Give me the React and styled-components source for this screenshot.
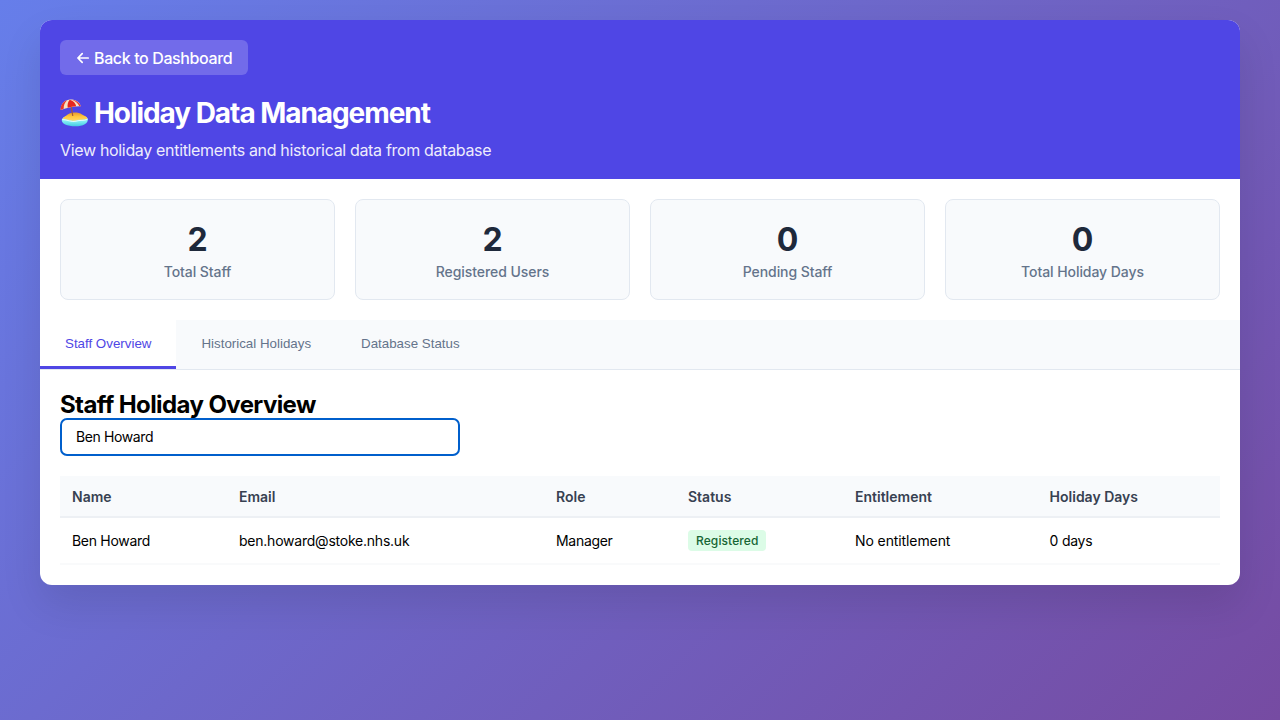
import React, { useState } from "react";
import styled, { createGlobalStyle } from "styled-components";

const GlobalStyle = createGlobalStyle`
  * { margin: 0; padding: 0; box-sizing: border-box; }
  body {
    font-family: Inter, "Liberation Sans", sans-serif;
    background: linear-gradient(135deg, #667eea 0%, #764ba2 100%);
    min-height: 100vh;
    padding: 20px;
  }
`;

const Card = styled.div`
  max-width: 1200px;
  margin: 0 auto;
  background: #fff;
  border-radius: 12px;
  box-shadow: 0 20px 40px rgba(0, 0, 0, 0.1);
  overflow: hidden;
`;

const Header = styled.header`
  background: #4f46e5;
  color: #fff;
  height: 159px;
  padding: 20px;
`;

const BackLink = styled.a`
  display: flex;
  align-items: center;
  gap: 4px;
  width: 188px;
  height: 35px;
  padding: 0 16px;
  border-radius: 6px;
  background: rgba(255, 255, 255, 0.2);
  font-size: 16px;
  font-weight: 450;
  letter-spacing: -0.38px;
  white-space: nowrap;
`;

const Title = styled.h1`
  display: flex;
  align-items: center;
  gap: 5px;
  margin-top: 21px;
  height: 34px;
  font-size: 28px;
  font-weight: 700;
  letter-spacing: -1.06px;
  white-space: nowrap;
`;

const Subtitle = styled.p`
  margin-top: 10px;
  font-size: 16px;
  line-height: 20px;
  letter-spacing: -0.33px;
  opacity: 0.9;
`;

const Stats = styled.section`
  display: grid;
  grid-template-columns: repeat(4, 1fr);
  gap: 20px;
  padding: 20px;
`;

const StatCard = styled.div`
  height: 101px;
  padding: 20px;
  border: 1px solid #e2e8f0;
  border-radius: 8px;
  background: #f8fafc;
  text-align: center;
`;

const StatValue = styled.div`
  font-size: 32px;
  line-height: 40px;
  font-weight: 700;
  color: #1e293b;
`;

const StatLabel = styled.div`
  margin-top: 3px;
  font-size: 14px;
  line-height: 17px;
  font-weight: 500;
  letter-spacing: -0.07px;
  color: #64748b;
`;

const Tabs = styled.nav`
  display: flex;
  height: 50px;
  background: #f8fafc;
  border-bottom: 1px solid #e2e8f0;
`;

const Tab = styled.button`
  padding: 1px 25px 0;
  border: none;
  border-bottom: 3px solid ${(p) => (p.$active ? "#4f46e5" : "transparent")};
  background: ${(p) => (p.$active ? "#fff" : "none")};
  color: ${(p) => (p.$active ? "#4f46e5" : "#64748b")};
  font: 13.333px "Liberation Sans", Arial, sans-serif;
  cursor: pointer;
`;

const Panel = styled.main`
  padding: 20px;
`;

const SectionTitle = styled.h2`
  height: 28px;
  font-size: 24px;
  line-height: 30px;
  font-weight: 700;
  letter-spacing: -0.6px;
`;

const Search = styled.input`
  display: block;
  width: 400px;
  height: 38px;
  margin-bottom: 20px;
  padding: 0 14px 1px;
  border: 2px solid #005fcc;
  border-radius: 7px;
  outline: none;
  background: #fff;
  color: #000;
  font: 14px Inter, "Liberation Sans", sans-serif;
  letter-spacing: -0.38px;
`;

const Table = styled.table`
  width: 100%;
  table-layout: fixed;
  border-collapse: separate;
  border-spacing: 0;
  font-size: 14px;
`;

const Col = styled.col`
  width: ${(p) => p.$width}px;
`;

const HeadCell = styled.th`
  height: 42px;
  padding: 0 12px;
  background: #f8fafc;
  border-bottom: 2px solid #edf0f4;
  color: #374151;
  font-weight: 600;
  text-align: left;
`;

const Cell = styled.td`
  height: 46.5px;
  padding: 0 12px;
  border-bottom: 2px solid #f9fafb;
  letter-spacing: ${(p) => p.$track || 0}px;
  white-space: nowrap;
`;

const Badge = styled.span`
  display: inline-block;
  padding: 0 8px;
  border-radius: 4px;
  background: #dcfce7;
  color: #166534;
  font-size: 12px;
  line-height: 21.5px;
  font-weight: 500;
  letter-spacing: 0.1px;
`;

const BeachIcon = styled.svg`
  width: 29px;
  height: 29px;
  flex: none;
`;

const ArrowIcon = styled.svg`
  width: 14px;
  height: 14px;
  flex: none;
`;

const Beach = () => (
  <BeachIcon viewBox="0 0 29 29">
    <defs>
      <linearGradient id="sea" x1="0" y1="0" x2="0" y2="1">
        <stop offset="0" stopColor="#b9f5fb" />
        <stop offset="0.6" stopColor="#7ceaf2" />
        <stop offset="1" stopColor="#43c8e4" />
      </linearGradient>
      <linearGradient id="sand" x1="0" y1="0" x2="0" y2="1">
        <stop offset="0" stopColor="#e79a2b" />
        <stop offset="0.5" stopColor="#ffc83e" />
        <stop offset="1" stopColor="#ffd76a" />
      </linearGradient>
    </defs>
    <path d="M1.800 20.500C3 17.500 8 16 15 16C22 16 27 17.500 27.800 20C28.500 24.500 23 27.300 15.500 27.300C7 27.300 1 24.500 1.800 20.500Z" fill="url(#sea)" />
    <path d="M2.500 19.500C5 17 7 16 9.500 14.500C13 13 19 13.300 22 15.500C24.500 16.800 27 17.500 27.500 19.500C24 21.500 20 20 16 21.500C12 22.500 7 20.300 2.500 19.500Z" fill="url(#sand)" />
    <path d="M2.300 20.600C7 20.500 12 23.600 16 22.200C20 20.700 24 22.200 27.500 20.300" fill="none" stroke="#effdff" strokeWidth="0.9" />
    <path d="M10.800 5L12.700 16.500" stroke="#a35b38" strokeWidth="1.200" strokeLinecap="round" />
    <path d="M0.700 11C0.600 5.500 4 1.500 8.700 0.800C14 -0.200 19.500 2.500 20.800 7.200C15 7 7 8.500 0.700 11Z" fill="#f7e3c4" />
    <path d="M0.700 11C0.300 6.500 3 2.500 7 1.200C4.500 3.800 3.600 6.500 3.700 9.800Z" fill="#e8382c" />
    <path d="M9.700 0.700C7.800 3 7.200 5.500 7.700 8.700C10.500 7.900 13.500 7.400 16.200 7.200C15.800 4.300 13.300 1.900 9.700 0.700Z" fill="#e5271f" />
    <path d="M11.500 0.700C16 1 19.800 3.500 20.800 7.200L19.200 7.100C17.800 3.800 15.500 2 11.500 0.700Z" fill="#e8382c" />
  </BeachIcon>
);

const Arrow = () => (
  <ArrowIcon viewBox="0 0 14 14" fill="none" stroke="currentColor" strokeWidth="1.700" strokeLinecap="round" strokeLinejoin="round">
    <path d="M12.200 7H2.100M6.200 2.700L1.900 7L6.200 11.300" />
  </ArrowIcon>
);

const stats = [
  ["2", "Total Staff"],
  ["2", "Registered Users"],
  ["0", "Pending Staff"],
  ["0", "Total Holiday Days"],
];
const tabs = ["Staff Overview", "Historical Holidays", "Database Status"];
const columns = [
  ["Name", 167],
  ["Email", 317],
  ["Role", 132],
  ["Status", 167],
  ["Entitlement", 194.6],
  ["Holiday Days", 182.4],
];
const staff = [
  { name: "Ben Howard", email: "ben.howard@stoke.nhs.uk", role: "Manager", status: "Registered", entitlement: "No entitlement", days: 0 },
];

export default function App() {
  const [active, setActive] = useState(tabs[0]);
  const [query, setQuery] = useState("Ben Howard");
  const rows = staff.filter((s) => s.name.toLowerCase().includes(query.toLowerCase()));
  return (
    <>
      <GlobalStyle />
      <Card>
        <Header>
          <BackLink><Arrow /><span>Back to Dashboard</span></BackLink>
          <Title><Beach /><span>Holiday Data Management</span></Title>
          <Subtitle>View holiday entitlements and historical data from database</Subtitle>
        </Header>
        <Stats>
          {stats.map(([value, label]) => (
            <StatCard key={label}>
              <StatValue>{value}</StatValue>
              <StatLabel>{label}</StatLabel>
            </StatCard>
          ))}
        </Stats>
        <Tabs>
          {tabs.map((t) => (
            <Tab key={t} $active={t === active} onClick={() => setActive(t)}>{t}</Tab>
          ))}
        </Tabs>
        <Panel>
          <SectionTitle>Staff Holiday Overview</SectionTitle>
          <Search value={query} onChange={(e) => setQuery(e.target.value)} />
          <Table>
            <colgroup>{columns.map(([n, w]) => <Col key={n} $width={w} />)}</colgroup>
            <thead><tr>{columns.map(([n]) => <HeadCell key={n}>{n}</HeadCell>)}</tr></thead>
            <tbody>
              {rows.map((s) => (
                <tr key={s.email}>
                  <Cell $track={-0.3}>{s.name}</Cell>
                  <Cell $track={-0.23}>{s.email}</Cell>
                  <Cell $track={-0.3}>{s.role}</Cell>
                  <Cell><Badge>{s.status}</Badge></Cell>
                  <Cell $track={-0.1}>{s.entitlement}</Cell>
                  <Cell $track={-0.25}>{s.days} days</Cell>
                </tr>
              ))}
            </tbody>
          </Table>
        </Panel>
      </Card>
    </>
  );
}
